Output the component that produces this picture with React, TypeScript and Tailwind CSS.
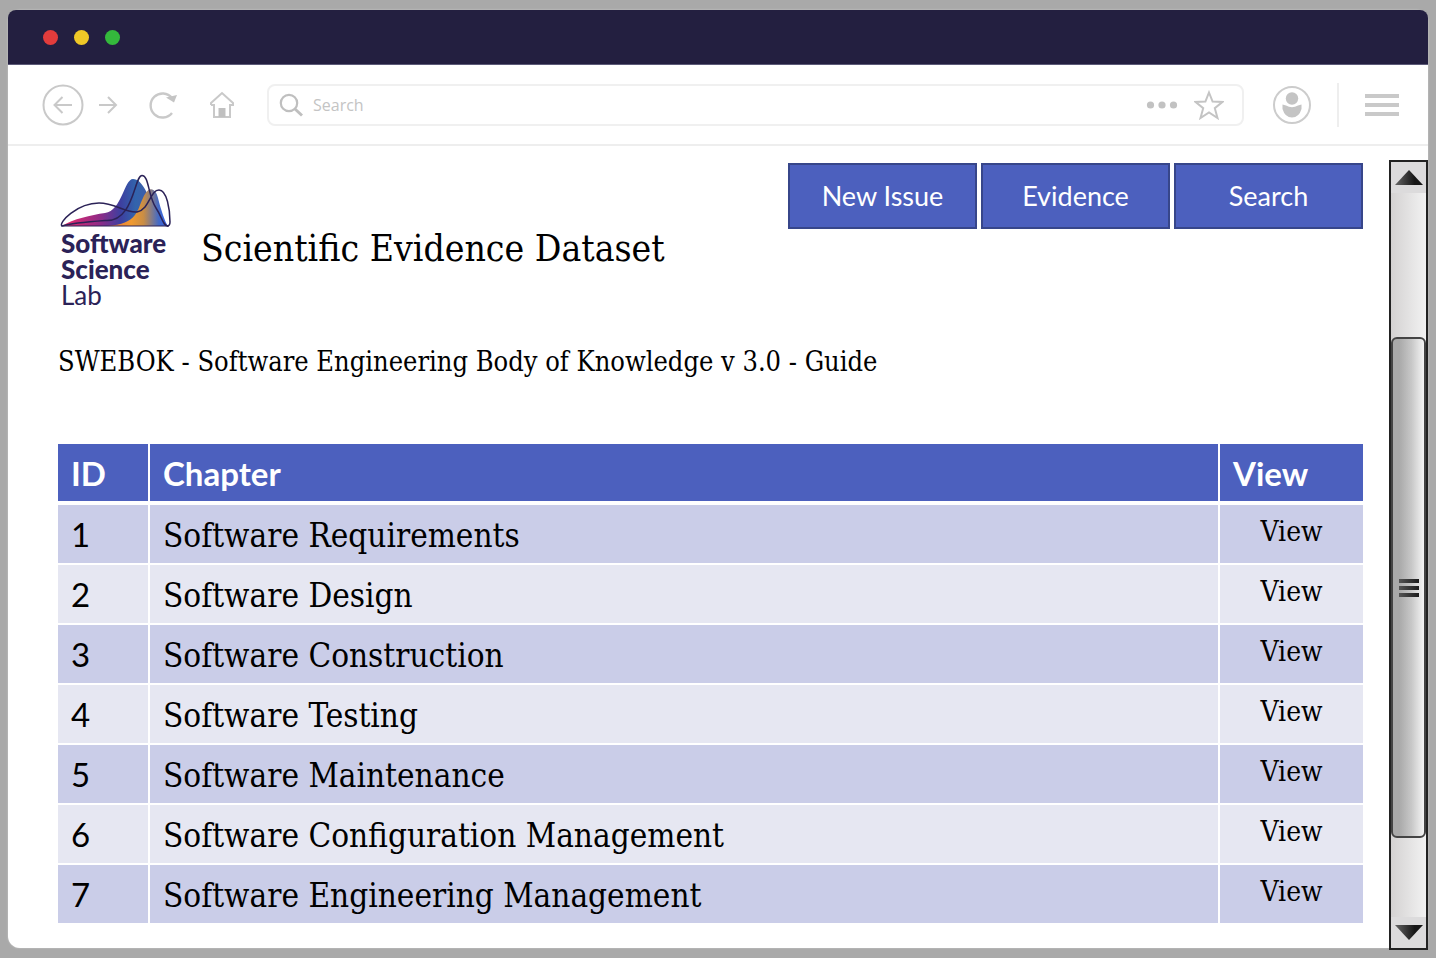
import React from "react";

const chapters = [
  "Software Requirements",
  "Software Design",
  "Software Construction",
  "Software Testing",
  "Software Maintenance",
  "Software Configuration Management",
  "Software Engineering Management",
];

const actions = ["New Issue", "Evidence", "Search"];

function TitleBar() {
  return (
    <div className="flex h-[55px] shrink-0 items-center gap-4 border-b border-[#5c5a78] bg-[#231f40] pl-[35px]">
      <span className="size-[15px] rounded-full bg-[#e23c3c]" />
      <span className="size-[15px] rounded-full bg-[#efc827]" />
      <span className="size-[15px] rounded-full bg-[#34b93c]" />
    </div>
  );
}

function Toolbar() {
  return (
    <div className="flex h-[81px] shrink-0 items-center border-b-2 border-[#eeeeee] pr-[29px] pl-[34px]">
      <button aria-label="Back" className="size-[42px]">
        <svg viewBox="0 0 42 42" fill="none" stroke="#c9c9c9" strokeWidth="2">
          <circle cx="21" cy="21" r="19.5" />
          <path d="M30 21H13M20.5 13L12.5 21L20.5 29" />
        </svg>
      </button>
      <button aria-label="Forward" className="ml-3.5 w-5">
        <svg viewBox="0 0 20 20" fill="none" stroke="#c9c9c9" strokeWidth="2">
          <path d="M1 10H18M10 2L18 10L10 18" />
        </svg>
      </button>
      <button aria-label="Reload" className="ml-[31px] w-7">
        <svg viewBox="0 0 28 28" fill="none" stroke="#c9c9c9" strokeWidth="2.4">
          <path d="M23 7A12 12 0 1 0 23 22" />
          <path d="M17 6.5L28 4L25 11.5Z" fill="#c4c4c4" stroke="none" />
        </svg>
      </button>
      <button aria-label="Home" className="ml-[33px] w-6">
        <svg viewBox="0 0 24 28" fill="none" stroke="#c9c9c9" strokeWidth="2">
          <path d="M1 14V12L12 2L23 12V14H20V26H4V14H1" />
          <path d="M8.5 26V17H15.5V26Z" fill="#c0c0c0" stroke="none" />
        </svg>
      </button>
      <div className="ml-[33px] flex h-[42px] flex-1 items-center rounded-lg border-2 border-[#f0f0f0] pr-[18px] pl-2.5">
        <svg viewBox="0 0 24 24" className="w-6" fill="none" stroke="#bfbfbf">
          <circle cx="10" cy="10" r="8.2" strokeWidth="2.2" />
          <path d="M16 16L23 22.5" strokeWidth="3" />
        </svg>
        <input
          aria-label="Address"
          placeholder="Search"
          className="ml-2.5 min-w-0 flex-1 text-base outline-none placeholder:text-[#c4c4c4]"
        />
        <button aria-label="More" className="w-8">
          <svg viewBox="0 0 32 8" fill="#c2c2c2">
            <circle cx="4.5" cy="4" r="3.6" />
            <circle cx="16" cy="4" r="3.6" />
            <circle cx="27.5" cy="4" r="3.6" />
          </svg>
        </button>
        <button aria-label="Bookmark" className="ml-4 w-[30px]">
          <svg viewBox="0 0 30 30" fill="none" stroke="#c4c4c4" strokeWidth="2">
            <path d="M15 2.5L18.6 11.5L28.3 12L20.8 18.2L23.5 28L15 22.5L6.5 28L9.2 18.2L1.7 12L11.4 11.5Z" />
          </svg>
        </button>
      </div>
      <button aria-label="Account" className="ml-7 w-10">
        <svg viewBox="0 0 40 40">
          <circle cx="20" cy="20" r="18" fill="none" stroke="#cccccc" strokeWidth="2" />
          <circle cx="20" cy="13.5" r="6.2" fill="#c4c4c4" />
          <path d="M10.5 19.5L14 20.5Q20 24 26 20.5L29.5 19.5V24Q27 32.5 20 32.5Q13 32.5 10.5 24Z" fill="#c4c4c4" />
        </svg>
      </button>
      <span className="ml-[25px] h-11 w-0.5 bg-[#eeeeee]" />
      <button aria-label="Menu" className="ml-[26px] flex w-[34px] flex-col gap-[5px]">
        <span className="h-1 w-full bg-[#c9c9c9]" />
        <span className="h-1 w-full bg-[#c9c9c9]" />
        <span className="h-1 w-full bg-[#c9c9c9]" />
      </button>
    </div>
  );
}

function Logo() {
  return (
    <div className="w-28 font-['Lato',sans-serif] text-[#2b2257]">
      <svg viewBox="0 0 112 56" className="w-28">
        <defs>
          <linearGradient id="peakBlue" x1="0" y1="0" x2="1" y2="0">
            <stop offset="0" stopColor="#ee2a6b" />
            <stop offset="0.38" stopColor="#912b86" />
            <stop offset="0.6" stopColor="#3d3fa0" />
            <stop offset="0.75" stopColor="#3264ac" />
            <stop offset="1" stopColor="#4a55a8" />
          </linearGradient>
          <linearGradient id="peakOrange" x1="0" y1="0" x2="1" y2="0">
            <stop offset="0" stopColor="#e8703f" />
            <stop offset="0.4" stopColor="#f09a30" />
            <stop offset="0.6" stopColor="#c98d45" />
            <stop offset="0.85" stopColor="#426ac8" />
            <stop offset="1" stopColor="#3762e8" />
          </linearGradient>
        </defs>
        <path d="M3 52C14 45 32 41 46 39C63 37 65 5 74 5C83 5 90 20 101 52Z" fill="url(#peakBlue)" />
        <path d="M48 52C79 50 78 36 84 24C90 10 97 15 99 24C102 36 106 48 109 52Z" fill="url(#peakOrange)" />
        <g fill="none" stroke="#2b2257" strokeWidth="1.5">
          <path d="M3 52C-1 49 18 29 40 29C56 29 66 39 78 38C91 35 91 16 100 16C108 16 111 36 111 48C111 51 110 52 108 52" />
          <path d="M3 52C13 49 26 48 46 46.500C75 49 75 1.500 83 1.500C90 1.500 89 22 97 34C103 43 104 52 109 52" />
          <path d="M2 52H110" strokeWidth="1" />
        </g>
      </svg>
      <p className="ml-0.5 text-[26px] leading-[26px] font-black">
        Software
        <br />
        Science
      </p>
      <p className="ml-0.5 text-[26px] leading-[26px]">Lab</p>
    </div>
  );
}

function ChapterTable() {
  return (
    <table className="mt-16 w-full table-fixed border-separate border-spacing-0 text-left">
      <colgroup>
        <col className="w-[92px]" />
        <col />
        <col className="w-[143px]" />
      </colgroup>
      <thead className="font-['Lato','Carlito',sans-serif] text-[33px] leading-10 font-bold text-white">
        <tr>
          {["ID", "Chapter", "View"].map((label) => (
            <th
              key={label}
              scope="col"
              className="h-15 border-r-2 border-b-3 border-white bg-[#4c60be] px-[13px] py-0 last:border-r-0"
            >
              {label}
            </th>
          ))}
        </tr>
      </thead>
      <tbody className="text-black">
        {chapters.map((chapter, i) => (
          <tr key={chapter} className="bg-[#cacde8] even:bg-[#e6e7f2]">
            <td className="h-15 border-y border-r-2 border-white px-[13px] py-0 font-['Lato','Carlito',sans-serif] text-[33px] leading-10">
              {i + 1}
            </td>
            <td className="h-15 border-y border-r-2 border-white px-[13px] pt-[3px] pb-0 text-[33px] leading-10">
              {chapter}
            </td>
            <td className="h-15 border-y border-white px-0 pt-0 pb-[5px] text-center text-[28px] leading-8">
              <a href={`#chapter-${i + 1}`}>View</a>
            </td>
          </tr>
        ))}
      </tbody>
    </table>
  );
}

function ScrollRail() {
  return (
    <div className="-mb-0.5 mt-3.5 flex w-[39px] shrink-0 flex-col border-2 border-[#222222] bg-linear-to-r from-[#d4d2d2] to-[#f2f2f2]">
      <button aria-label="Scroll up" className="flex h-[31px] items-center justify-center bg-[#dcdbdc]">
        <svg viewBox="0 0 28 15" className="w-7">
          <defs>
            <linearGradient id="arrowShade">
              <stop offset="0" stopColor="#666666" />
              <stop offset="0.7" stopColor="#161616" />
            </linearGradient>
          </defs>
          <path d="M14 0L28 15H0Z" fill="url(#arrowShade)" />
        </svg>
      </button>
      <div className="flex-[145]" />
      <div className="flex flex-[500] flex-col items-center justify-center gap-[3px] rounded-md border-2 border-[#444444] bg-linear-to-r from-[#a9a9a9] from-20% via-[#c8c8c8] via-60% to-[#f5f5f5]">
        <span className="h-1 w-5 bg-linear-to-r from-[#555555] to-[#1c1c1c]" />
        <span className="h-1 w-5 bg-linear-to-r from-[#555555] to-[#1c1c1c]" />
        <span className="h-1 w-5 bg-linear-to-r from-[#555555] to-[#1c1c1c]" />
      </div>
      <div className="flex-[79]" />
      <button aria-label="Scroll down" className="flex h-[31px] items-center justify-center bg-[#dcdbdc]">
        <svg viewBox="0 0 28 15" className="w-7">
          <path d="M0 0H28L14 15Z" fill="url(#arrowShade)" />
        </svg>
      </button>
    </div>
  );
}

export default function App() {
  return (
    <div className="flex min-h-screen flex-col bg-[#a9a9a9] px-2 py-2.5 font-['Open_Sans',sans-serif]">
      <div className="flex flex-1 flex-col rounded-xl bg-white shadow-[0_0_2px_#d0d0d0]">
        <div className="overflow-hidden rounded-t-lg">
          <TitleBar />
        </div>
        <Toolbar />
        <div className="flex flex-1">
          <main className="min-w-0 flex-1 pr-[26px] pb-6 pl-[50px] font-['DejaVu_Serif_Condensed','DejaVu_Serif',serif]">
            <header className="flex items-start pt-[17px]">
              <div className="pt-[11px] pl-px">
                <Logo />
              </div>
              <h1 className="mt-[62px] ml-[30px] text-[37px] leading-12 text-black">
                Scientific Evidence Dataset
              </h1>
              <nav className="ml-auto flex gap-1">
                {actions.map((label) => (
                  <button
                    key={label}
                    className="h-[66px] w-[189px] border-2 border-[#37468a] bg-[#4c60be] font-['Lato','Carlito',sans-serif] text-[27px] text-white"
                  >
                    {label}
                  </button>
                ))}
              </nav>
            </header>
            <p className="mt-9 text-[27px] leading-9 text-black">
              SWEBOK - Software Engineering Body of Knowledge v 3.0 - Guide
            </p>
            <ChapterTable />
          </main>
          <ScrollRail />
        </div>
      </div>
    </div>
  );
}
